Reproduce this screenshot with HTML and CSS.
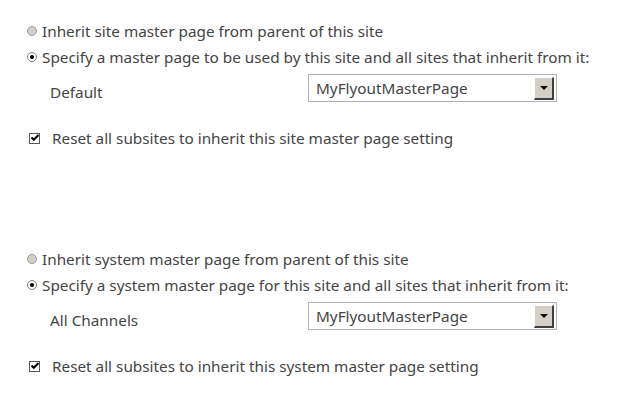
FILE: index.html
```html
<!DOCTYPE html>
<html>
<head>
<meta charset="utf-8">
<link rel="stylesheet" href="styles.css">
</head>
<body>
<div class="page">
  <section class="group group-site">
    <div class="opt">
      <span class="radio"></span>
      <span class="label">Inherit site master page from parent of this site</span>
    </div>
    <div class="opt">
      <span class="radio checked"></span>
      <span class="label">Specify a master page to be used by this site and all sites that inherit from it:</span>
    </div>
    <div class="select-row">
      <span class="field-label">Default</span>
      <div class="select">
        <span class="select-text">MyFlyoutMasterPage</span>
        <span class="select-btn"><span class="arrow"></span></span>
      </div>
    </div>
    <div class="check-row">
      <span class="check"><svg width="8" height="8" viewBox="0 0 8 8"><path d="M0.5 3.5 L2.8 5.8 L7.5 1" fill="none" stroke="#000" stroke-width="2"/></svg></span>
      <span class="label">Reset all subsites to inherit this site master page setting</span>
    </div>
  </section>

  <section class="group group-system">
    <div class="opt">
      <span class="radio"></span>
      <span class="label">Inherit system master page from parent of this site</span>
    </div>
    <div class="opt">
      <span class="radio checked"></span>
      <span class="label">Specify a system master page for this site and all sites that inherit from it:</span>
    </div>
    <div class="select-row">
      <span class="field-label">All Channels</span>
      <div class="select">
        <span class="select-text">MyFlyoutMasterPage</span>
        <span class="select-btn"><span class="arrow"></span></span>
      </div>
    </div>
    <div class="check-row">
      <span class="check"><svg width="8" height="8" viewBox="0 0 8 8"><path d="M0.5 3.5 L2.8 5.8 L7.5 1" fill="none" stroke="#000" stroke-width="2"/></svg></span>
      <span class="label">Reset all subsites to inherit this system master page setting</span>
    </div>
  </section>
</div>
</body>
</html>
```

FILE: styles.css
```css
html, body {
  margin: 0;
  padding: 0;
  background: #fff;
}
body {
  font-family: "Noto Sans", "Open Sans", sans-serif;
  font-size: 15.3px;
  color: #444;
}
.page {
  padding: 18px 0 0 27px;
}
.group-system {
  margin-top: 96px;
}
.opt {
  display: flex;
  align-items: center;
  height: 26px;
}
.radio {
  width: 8px;
  height: 8px;
  border-radius: 50%;
  border: 1px solid #9a9a9a;
  background: #d4d0c8;
  margin-right: 5px;
  position: relative;
  flex: none;
}
.radio.checked {
  background: #fff;
  border-color: #808080;
}
.radio.checked::after {
  content: "";
  position: absolute;
  left: 2px;
  top: 2px;
  width: 4px;
  height: 4px;
  border-radius: 50%;
  background: #000;
}
.select-row {
  display: flex;
  align-items: center;
  margin-top: 4px;
  height: 28px;
}
.field-label {
  width: 281px;
  padding-left: 23px;
  box-sizing: border-box;
  padding-top: 8px;
}
.select {
  width: 249px;
  height: 28px;
  box-sizing: border-box;
  border: 1px solid #b3b3b3;
  background: #fff;
  display: flex;
  align-items: center;
  justify-content: space-between;
  padding: 2px 2px 2px 7px;
}
.select-btn {
  width: 20px;
  height: 23px;
  background: #d4d0c8;
  box-sizing: border-box;
  border-top: 1px solid #fff;
  border-left: 1px solid #fff;
  border-right: 2px solid #404040;
  border-bottom: 2px solid #404040;
  display: flex;
  align-items: center;
  justify-content: center;
}
.arrow {
  width: 0;
  height: 0;
  border-left: 4px solid transparent;
  border-right: 4px solid transparent;
  border-top: 4px solid #000;
}
.check-row {
  display: flex;
  align-items: center;
  margin-top: 24px;
  height: 24px;
}
.check {
  width: 11px;
  height: 11px;
  box-sizing: border-box;
  border: 1px solid #555;
  background: #fff;
  display: flex;
  align-items: center;
  justify-content: center;
  margin-left: 2px;
  margin-right: 12px;
  flex: none;
}
.check svg {
  display: block;
}
```
